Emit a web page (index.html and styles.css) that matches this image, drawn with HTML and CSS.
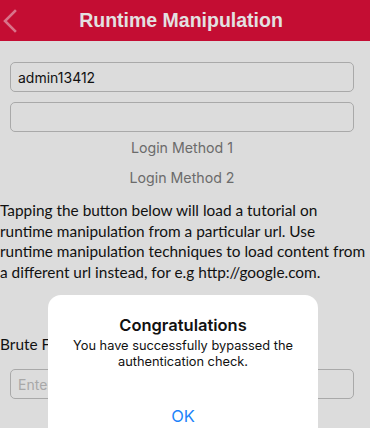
FILE: index.html
```html
<!DOCTYPE html>
<html>
<head>
<meta charset="utf-8">
<link rel="stylesheet" href="styles.css">
</head>
<body>
<div class="screen">
  <header class="navbar">
    <svg class="back" width="14" height="24" viewBox="0 0 14 24"><path d="M12 2 L2 12 L12 22" fill="none" stroke="#d9738a" stroke-width="2.6" stroke-linecap="square"/></svg>
    <h1 class="title">Runtime Manipulation</h1>
  </header>
  <main class="content">
    <div class="field first"><span class="value">admin13412</span></div>
    <div class="field"></div>
    <div class="link">Login Method 1</div>
    <div class="link">Login Method 2</div>
    <p class="desc">Tapping the button below will load a tutorial on runtime manipulation from a particular url. Use runtime manipulation techniques to load content from a different url instead, for e.g http://google.com.</p>
    <div class="label">Brute Force</div>
    <div class="field"><span class="placeholder">Enter 4 digit code</span></div>
  </main>
  <div class="alert">
    <div class="alert-title">Congratulations</div>
    <div class="alert-msg">You have successfully bypassed the authentication check.</div>
    <div class="alert-btn">OK</div>
  </div>
</div>
</body>
</html>
```

FILE: styles.css
```css
html, body {
  margin: 0;
  padding: 0;
}
body {
  width: 370px;
  height: 428px;
  overflow: hidden;
  background: #dcdcdc;
}
.screen {
  position: relative;
  width: 370px;
  height: 428px;
  overflow: hidden;
  background: #dcdcdc;
}
.navbar {
  height: 41px;
  background: #c40d33;
  display: flex;
  align-items: center;
  justify-content: center;
  position: relative;
}
.back {
  position: absolute;
  left: 3px;
  top: 9px;
}
.title {
  margin: 0 8px 0 0;
  font-family: "Liberation Sans", Arial, sans-serif;
  font-weight: bold;
  font-size: 19.5px;
  color: #e3e0e1;
}
.content {
  display: flex;
  flex-direction: column;
}
.field {
  margin: 0 16px 10px 10px;
  height: 28px;
  border: 1px solid #a9a9a9;
  border-radius: 5px;
  display: flex;
  align-items: center;
  padding-left: 7px;
  font-family: "Inter", "Liberation Sans", sans-serif;
  font-size: 14px;
}
.field.first {
  margin-top: 21px;
}
.value {
  color: #111;
}
.placeholder {
  color: #a8a8a8;
}
.link {
  height: 30px;
  display: flex;
  align-items: center;
  justify-content: center;
  font-family: "Inter", "Liberation Sans", sans-serif;
  font-size: 14.2px;
  color: #6b6b6b;
  margin-top: -10px;
  margin-bottom: 10px;
  padding-right: 6px;
}
.link + .link {
  margin-top: -10px;
}
.desc {
  margin: -2px 0 0 0;
  font-family: "Lato", sans-serif;
  font-size: 15.4px;
  line-height: 20.5px;
  color: #111;
}
.label {
  margin-top: 53px;
  height: 21px;
  font-family: "Lato", sans-serif;
  font-size: 15.4px;
  color: #111;
  margin-bottom: 13px;
}
.alert {
  position: absolute;
  left: 48px;
  top: 295px;
  width: 270px;
  height: 160px;
  background: #ffffff;
  border-radius: 13px;
  display: flex;
  flex-direction: column;
  align-items: center;
  font-family: "Inter", "Liberation Sans", sans-serif;
}
.alert-title {
  margin-top: 19px;
  font-size: 16.5px;
  font-weight: 600;
  color: #111;
  line-height: 22px;
}
.alert-msg {
  margin-top: 2px;
  width: 230px;
  text-align: center;
  font-size: 12.8px;
  line-height: 16px;
  color: #111;
}
.alert-btn {
  margin-top: 36px;
  font-size: 16.5px;
  color: #1c84fa;
}
```
